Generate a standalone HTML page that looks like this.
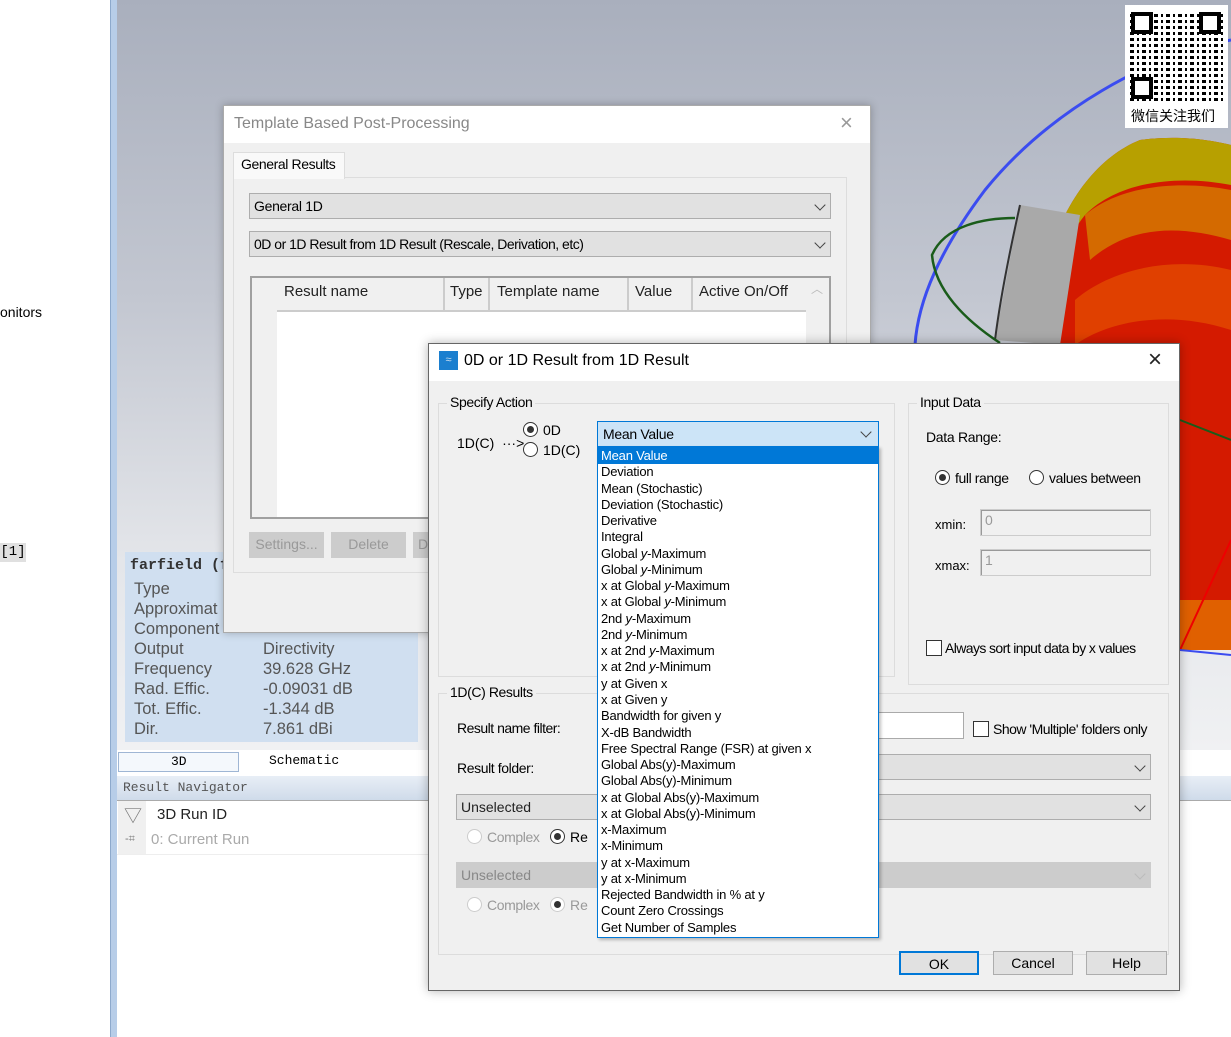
<!DOCTYPE html>
<html><head><meta charset="utf-8"><style>
*{margin:0;padding:0;box-sizing:border-box}
body{width:1231px;height:1037px;position:relative;overflow:hidden;background:#fff;font-family:"Liberation Sans","Noto Sans CJK SC",sans-serif;font-size:13px;color:#000}
.a{position:absolute}
.t{position:absolute;white-space:nowrap}
.combo{position:absolute;background:#e1e1e1;border:1px solid #adadad}
.combo .t{left:4px;top:4px;font-size:14px}
.chev{position:absolute;right:6px;top:7px;width:8px;height:8px;border-right:1.5px solid #444;border-bottom:1.5px solid #444;transform:rotate(45deg)}
.grp{position:absolute;border:1px solid #dcdcdc}
.gl{position:absolute;background:#f0f0f0;padding:0 3px;font-size:14px;top:-10px;left:8px}
.radio{position:absolute;width:15px;height:15px;border:1px solid #333;border-radius:50%;background:#fff}
.radio.on::after{content:"";position:absolute;left:3px;top:3px;width:7px;height:7px;border-radius:50%;background:#333}
.btn{position:absolute;background:#e1e1e1;border:1px solid #adadad;text-align:center;font-size:14px;line-height:22px}
.mono{font-family:"Liberation Mono",monospace}
.dd{font-size:13px;letter-spacing:-0.2px}
</style></head><body>
<!-- left panel -->
<div class="t" style="left:0;top:304px;font-size:14px">onitors</div>
<div class="a mono" style="left:0;top:543px;width:26px;height:19px;background:#e0e0e0;font-size:14px;line-height:19px;text-align:center">[1]</div>
<div class="a" style="left:110px;top:0;width:7px;height:1037px;background:#b7cde8;border-left:1px solid #8da9cc"></div>
<!-- viewport -->
<div class="a" style="left:117px;top:0;width:1114px;height:750px;background:linear-gradient(#a9afbd,#c3c7d1 40%,#e4e6ea 75%,#f0f1f3)"></div>
<svg class="a" style="left:0;top:0" width="1231" height="750">
<path d="M1231 40 C 1150 55 1050 110 985 190 C 940 250 918 300 915 345" fill="none" stroke="#3b4cf0" stroke-width="3"/>
<path d="M1040 300 C 1050 220 1090 160 1140 140 C 1180 135 1210 140 1231 145 L1231 650 L1180 650 C 1150 600 1090 520 1060 430 C 1045 390 1038 340 1040 300Z" fill="#d41a00"/>
<path d="M1040 300 C 1050 220 1090 160 1140 140 C 1180 135 1210 140 1231 145 L1231 185 C 1180 175 1120 180 1085 215 C 1065 240 1055 270 1050 310Z" fill="#b7a000"/>
<path d="M1085 215 C 1120 185 1180 180 1231 190 L1231 240 C 1180 225 1130 225 1090 260Z" fill="#d46a00"/>
<path d="M1075 300 C 1110 270 1170 255 1231 270 L1231 330 C 1170 310 1110 320 1075 345Z" fill="#e04000"/>
<path d="M1120 600 L1231 600 L1231 650 L1180 650Z" fill="#e06000"/>
<path d="M1020 205 L1080 215 L1060 345 L995 340Z" fill="#a9a9a9"/>
<path d="M1020 205 C 1010 250 1000 300 995 340" fill="none" stroke="#333" stroke-width="2"/>
<path d="M1015 218 C 985 218 945 225 932 255 C 935 290 965 320 1000 343" fill="none" stroke="#1a5c1a" stroke-width="2.5"/>
<path d="M1180 420 L1231 440" stroke="#1a5c1a" stroke-width="2"/>
<path d="M1231 540 L1180 650" stroke="#e00" stroke-width="2"/>
<path d="M1180 650 L1231 655" stroke="#3b4cf0" stroke-width="2"/>
</svg>
<!-- QR -->
<div class="a" style="left:1125px;top:5px;width:103px;height:123px;background:#fff"></div>
<div class="a" style="left:1130px;top:11px;width:94px;height:90px;background:repeating-linear-gradient(90deg,#000 0 4px,#fff 4px 7px,#000 7px 9px,#fff 9px 12px),repeating-linear-gradient(0deg,#000 0 3px,#fff 3px 6px);background-blend-mode:lighten"></div>
<div class="a" style="left:1131px;top:12px;width:22px;height:22px;border:4px solid #000;background:#fff"></div>
<div class="a" style="left:1199px;top:12px;width:22px;height:22px;border:4px solid #000;background:#fff"></div>
<div class="a" style="left:1131px;top:77px;width:22px;height:22px;border:4px solid #000;background:#fff"></div>
<div class="t" style="left:1131px;top:106px;font-size:14px">微信关注我们</div>
<!-- farfield info -->
<div class="a" style="left:125px;top:552px;width:293px;height:190px;background:#d0dff0"></div>
<div class="t mono" style="left:130px;top:557px;font-size:15px;font-weight:bold;color:#333">farfield (f</div>
<div class="a" style="left:134px;top:579px;font-size:16.5px;line-height:20px;color:#555">Type<br>Approximat<br>Component<br>Output<br>Frequency<br>Rad. Effic.<br>Tot. Effic.<br>Dir.</div>
<div class="a" style="left:263px;top:639px;font-size:16.5px;line-height:20px;color:#555">Directivity<br>39.628 GHz<br>-0.09031 dB<br>-1.344 dB<br>7.861 dBi</div>
<!-- tabs & navigator -->
<div class="a" style="left:117px;top:750px;width:320px;height:25px;background:#fff"></div>
<div class="a" style="left:118px;top:752px;width:121px;height:20px;background:#f4f8fc;border:1px solid #9fb6d4"></div>
<div class="t mono" style="left:171px;top:754px;font-size:13px">3D</div>
<div class="t mono" style="left:269px;top:753px;font-size:13px">Schematic</div>
<div class="a" style="left:117px;top:776px;width:1114px;height:24px;background:linear-gradient(#e8eef6,#cfdbea)"></div>
<div class="t mono" style="left:123px;top:780px;font-size:13px;color:#555">Result Navigator</div>
<div class="a" style="left:117px;top:800px;width:1114px;height:237px;background:#fff;border-top:1px solid #aaa"></div>
<div class="a" style="left:118px;top:801px;width:28px;height:53px;background:#f0f0f0"></div>
<div class="t" style="left:124px;top:802px;font-size:18px;color:#777">▽</div>
<div class="t" style="left:157px;top:806px;font-size:15px;color:#222">3D Run ID</div>
<div class="t" style="left:125px;top:833px;font-size:11px;color:#777">-⌗</div>
<div class="t" style="left:151px;top:831px;font-size:15px;color:#aaa">0: Current Run</div>
<div class="a" style="left:117px;top:854px;width:320px;height:1px;background:#eee"></div>
<!-- dialog 1 -->
<div class="a" style="left:223px;top:105px;width:648px;height:528px;background:#f0f0f0;border:1px solid #aaa;box-shadow:0 0 8px rgba(0,0,0,.25)"></div>
<div class="a" style="left:224px;top:106px;width:646px;height:37px;background:#fff"></div>
<div class="t" style="left:234px;top:115px;font-size:16px;color:#888">Template Based Post-Processing</div>
<div class="t" style="left:840px;top:110px;font-size:22px;color:#999">×</div>
<div class="a" style="left:233px;top:177px;width:614px;height:396px;border:1px solid #ddd;background:#f0f0f0"></div>
<div class="a" style="left:233px;top:152px;width:112px;height:27px;background:#f9f9f9;border:1px solid #ddd;border-bottom:none"></div>
<div class="t" style="left:241px;top:156px;font-size:14px;letter-spacing:-0.4px">General Results</div>
<div class="combo" style="left:249px;top:193px;width:582px;height:26px"><div class="t" style="letter-spacing:-0.3px">General 1D</div><div class="chev"></div></div>
<div class="combo" style="left:249px;top:231px;width:582px;height:26px"><div class="t" style="letter-spacing:-0.5px">0D or 1D Result from 1D Result (Rescale, Derivation, etc)</div><div class="chev"></div></div>
<div class="a" style="left:250px;top:276px;width:581px;height:243px;background:#fff;border:2px solid #a0a0a0"></div>
<div class="a" style="left:252px;top:278px;width:25px;height:239px;background:#f0f0f0"></div>
<div class="a" style="left:806px;top:278px;width:23px;height:239px;background:#f0f0f0"></div>
<div class="a" style="left:277px;top:278px;width:529px;height:34px;background:#f0f0f0;border-bottom:2px solid #ccc"></div>
<div class="t" style="left:284px;top:283px;font-size:15px;color:#222">Result name</div>
<div class="a" style="left:443px;top:278px;width:2px;height:34px;background:#ccc"></div>
<div class="t" style="left:450px;top:283px;font-size:15px;color:#222">Type</div>
<div class="a" style="left:488px;top:278px;width:2px;height:34px;background:#ccc"></div>
<div class="t" style="left:497px;top:283px;font-size:15px;color:#222">Template name</div>
<div class="a" style="left:627px;top:278px;width:2px;height:34px;background:#ccc"></div>
<div class="t" style="left:635px;top:283px;font-size:15px;color:#222">Value</div>
<div class="a" style="left:691px;top:278px;width:2px;height:34px;background:#ccc"></div>
<div class="t" style="left:699px;top:283px;font-size:15px;color:#222">Active On/Off</div>
<div class="t" style="left:811px;top:280px;font-size:12px;color:#bbb">︿</div>
<div class="btn" style="left:249px;top:532px;width:75px;height:26px;background:#ccc;border-color:#ccc;color:#999">Settings...</div>
<div class="btn" style="left:331px;top:532px;width:75px;height:26px;background:#ccc;border-color:#ccc;color:#999">Delete</div>
<div class="btn" style="left:413px;top:532px;width:20px;height:26px;background:#ccc;border-color:#ccc;color:#999">D</div>
<!-- dialog 2 -->
<div class="a" style="left:428px;top:343px;width:752px;height:648px;background:#f0f0f0;border:1px solid #666;box-shadow:0 0 10px rgba(0,0,0,.3)"></div>
<div class="a" style="left:429px;top:344px;width:750px;height:37px;background:#fff"></div>
<div class="a" style="left:439px;top:351px;width:19px;height:19px;background:#1b7fcf;color:#cde;font-size:11px;line-height:19px;text-align:center">≈</div>
<div class="t" style="left:464px;top:352px;font-size:16px">0D or 1D Result from 1D Result</div>
<div class="t" style="left:1148px;top:346px;font-size:24px;color:#222">×</div>
<div class="grp" style="left:438px;top:403px;width:457px;height:274px"><div class="gl" style="letter-spacing:-0.4px">Specify Action</div></div>
<div class="t" style="left:457px;top:435px;font-size:14px">1D(C) &nbsp;···&gt;</div>
<div class="radio on" style="left:523px;top:422px"></div><div class="t" style="left:543px;top:422px;font-size:14px">0D</div>
<div class="radio" style="left:523px;top:442px"></div><div class="t" style="left:543px;top:442px;font-size:14px">1D(C)</div>
<div class="grp" style="left:908px;top:403px;width:261px;height:282px"><div class="gl" style="letter-spacing:-0.4px">Input Data</div></div>
<div class="t" style="left:926px;top:429px;font-size:14px;letter-spacing:-0.3px">Data Range:</div>
<div class="radio on" style="left:935px;top:470px"></div><div class="t" style="left:955px;top:470px;font-size:14px;letter-spacing:-0.4px">full range</div>
<div class="radio" style="left:1029px;top:470px"></div><div class="t" style="left:1049px;top:470px;font-size:14px;letter-spacing:-0.4px">values between</div>
<div class="t" style="left:935px;top:517px;font-size:13px">xmin:</div>
<div class="a" style="left:980px;top:509px;width:171px;height:27px;border:1px solid #ccc;background:#f0f0f0;font-size:14px;color:#999;padding:2px 4px;box-shadow:inset 1px 1px #999">0</div>
<div class="t" style="left:935px;top:558px;font-size:13px">xmax:</div>
<div class="a" style="left:980px;top:549px;width:171px;height:27px;border:1px solid #ccc;background:#f0f0f0;font-size:14px;color:#999;padding:2px 4px;box-shadow:inset 1px 1px #999">1</div>
<div class="a" style="left:926px;top:640px;width:16px;height:16px;border:1px solid #333;background:#fff"></div>
<div class="t" style="left:945px;top:640px;font-size:14px;letter-spacing:-0.6px">Always sort input data by x values</div>
<div class="grp" style="left:438px;top:693px;width:731px;height:262px"><div class="gl" style="letter-spacing:-0.4px">1D(C) Results</div></div>
<div class="t" style="left:457px;top:720px;font-size:14px;letter-spacing:-0.5px">Result name filter:</div>
<div class="a" style="left:870px;top:712px;width:94px;height:27px;background:#fff;border:1px solid #aaa"></div>
<div class="a" style="left:973px;top:721px;width:16px;height:16px;border:1px solid #333;background:#fff"></div>
<div class="t" style="left:993px;top:721px;font-size:14px;letter-spacing:-0.5px">Show 'Multiple' folders only</div>
<div class="t" style="left:457px;top:760px;font-size:14px;letter-spacing:-0.4px">Result folder:</div>
<div class="combo" style="left:870px;top:754px;width:281px;height:26px"><div class="chev"></div></div>
<div class="combo" style="left:456px;top:794px;width:695px;height:26px"><div class="t" style="color:#222">Unselected</div><div class="chev"></div></div>
<div class="radio" style="left:467px;top:829px;border-color:#ccc"></div><div class="t" style="left:487px;top:829px;font-size:14px;color:#999;letter-spacing:-0.4px">Complex</div>
<div class="radio on" style="left:550px;top:829px"></div><div class="t" style="left:570px;top:829px;font-size:14px">Re</div>
<div class="combo" style="left:456px;top:862px;width:695px;height:26px;background:#ccc;border-color:#ccc"><div class="t" style="color:#888">Unselected</div><div class="chev" style="border-color:#bbb"></div></div>
<div class="radio" style="left:467px;top:897px;border-color:#ccc"></div><div class="t" style="left:487px;top:897px;font-size:14px;color:#999;letter-spacing:-0.4px">Complex</div>
<div class="radio on" style="left:550px;top:897px;border-color:#ccc"></div><div class="t" style="left:570px;top:897px;font-size:14px;color:#999">Re</div>
<div class="btn" style="left:899px;top:951px;width:80px;height:24px;border:2px solid #0078d7">OK</div>
<div class="btn" style="left:993px;top:951px;width:80px;height:24px">Cancel</div>
<div class="btn" style="left:1086px;top:951px;width:81px;height:24px">Help</div>
<!-- dropdown -->
<div class="a" style="left:597px;top:421px;width:282px;height:26px;background:#cce4f7;border:1px solid #0078d7"></div>
<div class="t" style="left:603px;top:426px;font-size:14px;letter-spacing:-0.3px">Mean Value</div>
<div class="chev" style="left:862px;top:428px"></div>
<div class="a" style="left:597px;top:446px;width:282px;height:492px;background:#fff;border:1px solid #0078d7;box-shadow:2px 2px 3px rgba(0,0,0,.25)"></div>
<div class="a" style="left:598px;top:447px;width:280px;height:17px;background:#0078d7"></div>
<div class="a dd" style="left:601px;top:448px;line-height:16.27px;white-space:nowrap">
<div style="color:#fff">Mean Value</div><div>Deviation</div><div>Mean (Stochastic)</div><div>Deviation (Stochastic)</div><div>Derivative</div><div>Integral</div><div>Global <i>y</i>-Maximum</div><div>Global <i>y</i>-Minimum</div><div>x at Global <i>y</i>-Maximum</div><div>x at Global <i>y</i>-Minimum</div><div>2nd <i>y</i>-Maximum</div><div>2nd <i>y</i>-Minimum</div><div>x at 2nd <i>y</i>-Maximum</div><div>x at 2nd <i>y</i>-Minimum</div><div>y at Given x</div><div>x at Given y</div><div>Bandwidth for given y</div><div>X-dB Bandwidth</div><div>Free Spectral Range (FSR) at given x</div><div>Global Abs(y)-Maximum</div><div>Global Abs(y)-Minimum</div><div>x at Global Abs(y)-Maximum</div><div>x at Global Abs(y)-Minimum</div><div>x-Maximum</div><div>x-Minimum</div><div>y at x-Maximum</div><div>y at x-Minimum</div><div>Rejected Bandwidth in % at y</div><div>Count Zero Crossings</div><div>Get Number of Samples</div>
</div>
</body></html>
